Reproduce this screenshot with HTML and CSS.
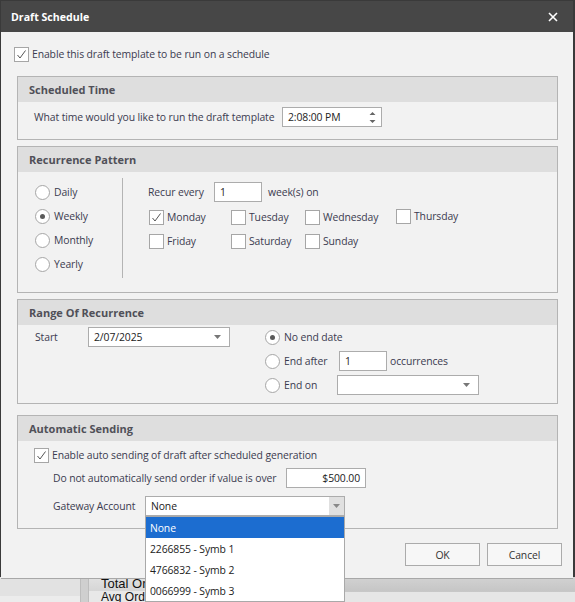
FILE: index.html
```html
<!DOCTYPE html>
<html>
<head>
<meta charset="utf-8">
<link rel="stylesheet" href="styles.css">
</head>
<body>
<div class="app">
  <div class="app-top"></div>
  <div class="app-bottom">
    <div class="app-side"></div>
    <div class="app-panel">
      <div class="app-text">Total Ord</div>
      <div class="app-text second">Avg Ord</div>
    </div>
    <div class="app-rest"></div>
  </div>
</div>

<div class="dialog">
  <div class="titlebar">
    <span class="title">Draft Schedule</span>
    <svg class="close" width="10" height="10" viewBox="0 0 10 10"><path d="M1 1L9 9M9 1L1 9" stroke="#fff" stroke-width="1.6"/></svg>
  </div>
  <div class="dlg-body">
    <div class="chk-row top-row">
      <span class="box"><svg width="13" height="13" viewBox="0 0 13 13"><path d="M2.5 7L5 10L10.5 2.5" fill="none" stroke="#555" stroke-width="1"/></svg></span>
      <span>Enable this draft template to be run on a schedule</span>
    </div>

    <section class="group g-time">
      <div class="group-head">Scheduled Time</div>
      <div class="group-body time-body">
        <span class="time-lbl">What time would you like to run the draft template</span>
        <div class="field spin">
          <span>2:08:00 PM</span>
          <svg width="7" height="13" viewBox="0 0 7 13"><path d="M0.5 4L3.5 1L6.5 4Z M0.5 9L3.5 12L6.5 9Z" fill="#666"/></svg>
        </div>
      </div>
    </section>

    <section class="group g-rec">
      <div class="group-head">Recurrence Pattern</div>
      <div class="group-body rec-body">
        <div class="rec-left">
          <div class="radio-row"><span class="radio"></span><span>Daily</span></div>
          <div class="radio-row"><span class="radio on"></span><span>Weekly</span></div>
          <div class="radio-row"><span class="radio"></span><span>Monthly</span></div>
          <div class="radio-row"><span class="radio"></span><span>Yearly</span></div>
        </div>
        <div class="rec-right">
          <div class="recur-row">
            <span>Recur every</span>
            <div class="field num">1</div>
            <span>week(s) on</span>
          </div>
          <div class="days">
            <div class="chk-row"><span class="box"><svg width="13" height="13" viewBox="0 0 13 13"><path d="M2.5 7L5 10L10.5 2.5" fill="none" stroke="#555" stroke-width="1"/></svg></span><span>Monday</span></div>
            <div class="chk-row"><span class="box"></span><span>Tuesday</span></div>
            <div class="chk-row"><span class="box"></span><span>Wednesday</span></div>
            <div class="chk-row thu"><span class="box"></span><span>Thursday</span></div>
            <div class="chk-row"><span class="box"></span><span>Friday</span></div>
            <div class="chk-row"><span class="box"></span><span>Saturday</span></div>
            <div class="chk-row"><span class="box"></span><span>Sunday</span></div>
          </div>
        </div>
      </div>
    </section>

    <section class="group g-range">
      <div class="group-head">Range Of Recurrence</div>
      <div class="group-body range-body">
        <div class="range-left">
          <span class="start-lbl">Start</span>
          <div class="field combo date">
            <span>2/07/2025</span>
            <svg width="7" height="4" viewBox="0 0 7 4"><path d="M0 0H7L3.5 4Z" fill="#777"/></svg>
          </div>
        </div>
        <div class="range-right">
          <div class="radio-row"><span class="radio on"></span><span>No end date</span></div>
          <div class="radio-row"><span class="radio"></span><span class="rlbl">End after</span><div class="field num">1</div><span class="occ">occurrences</span></div>
          <div class="radio-row"><span class="radio"></span><span class="rlbl end-on">End on</span>
            <div class="field combo endon">
              <span></span>
              <svg width="7" height="4" viewBox="0 0 7 4"><path d="M0 0H7L3.5 4Z" fill="#777"/></svg>
            </div>
          </div>
        </div>
      </div>
    </section>

    <section class="group g-auto">
      <div class="group-head">Automatic Sending</div>
      <div class="group-body auto-body">
        <div class="chk-row">
          <span class="box"><svg width="13" height="13" viewBox="0 0 13 13"><path d="M2.5 7L5 10L10.5 2.5" fill="none" stroke="#555" stroke-width="1"/></svg></span>
          <span>Enable auto sending of draft after scheduled generation</span>
        </div>
        <div class="auto-row value-row">
          <span>Do not automatically send order if value is over</span>
          <div class="field money">$500.00</div>
        </div>
        <div class="auto-row gw-row">
          <span>Gateway Account</span>
          <div class="field combo gw">
            <span>None</span>
            <span class="dd-btn"><svg width="7" height="4" viewBox="0 0 7 4"><path d="M0 0H7L3.5 4Z" fill="#888"/></svg></span>
          </div>
        </div>
      </div>
    </section>

    <div class="buttons">
      <div class="btn">OK</div>
      <div class="btn">Cancel</div>
    </div>
  </div>

  <div class="dropdown">
    <div class="item sel">None</div>
    <div class="item">2266855 - Symb 1</div>
    <div class="item">4766832 - Symb 2</div>
    <div class="item">0066999 - Symb 3</div>
  </div>
</div>
</body>
</html>
```

FILE: styles.css
```css
html, body {
  margin: 0;
  padding: 0;
}
body {
  width: 575px;
  height: 602px;
  overflow: hidden;
  position: relative;
  background: #d4d4d4;
  font-family: "Open Sans", "Noto Sans", sans-serif;
  font-size: 10.4px;
  letter-spacing: -0.1px;
  color: #3b3b50;
}

/* background application */
.app {
  width: 575px;
  height: 602px;
  display: flex;
  flex-direction: column;
  overflow: hidden;
}
.app-top {
  flex: none;
  height: 577px;
  background: #3a3a3a;
}
.app-bottom {
  flex: none;
  height: 25px;
  display: flex;
  background: #cfcfcf;
}
.app-side {
  width: 80px;
  background: #e2e2e2;
  border-right: 1px solid #bdbdbd;
  box-shadow: inset 0 -6px 0 #ececec;
}
.app-panel {
  margin-left: 7px;
  border-left: 1px solid #bdbdbd;
  width: 45px;
  background: linear-gradient(#e2e2e2, #d6d6d6 55%, #e8e8e8 56%, #e8e8e8);
  padding: 0 0 0 12px;
}
.app-rest {
  flex: 1;
  background: linear-gradient(#d2d2d2, #c6c6c6 55%, #a9a9a9 56%, #e6e6e6 60%, #e6e6e6);
}
.app-text {
  font-family: "Liberation Sans", Arial, sans-serif;
  font-size: 13px;
  letter-spacing: 0;
  color: #111;
  line-height: 13px;
  margin-top: 0;
  white-space: nowrap;
}
.app-text.second {
  margin-top: 2px;
  font-size: 12px;
  line-height: 10px;
}

/* dialog */
.dialog {
  position: absolute;
  left: 1px;
  top: 1px;
  width: 572px;
  height: 577px;
  background: #f2f2f2;
  box-shadow: 0 1px 0 #a8a8a8;
}
.titlebar {
  height: 31px;
  background: #474747;
  color: #fff;
  display: flex;
  align-items: center;
  justify-content: space-between;
  padding: 0 15px 0 10px;
}
.title {
  font-weight: 700;
  font-size: 10.6px;
  letter-spacing: 0;
}
.dlg-body {
  padding: 0 15px 0 13px;
}

.chk-row {
  display: flex;
  align-items: center;
  gap: 3px;
  height: 16px;
  white-space: nowrap;
}
.box {
  width: 13px;
  height: 13px;
  border: 1px solid #a6a6a6;
  background: #fff;
  flex: none;
  display: flex;
}
.top-row {
  margin-top: 14px;
}

.group {
  margin-left: 3px;
  width: 539px;
  border: 1px solid #b4b4b4;
}
.group-head {
  height: 25px;
  background: #dedede;
  font-weight: 700;
  font-size: 11px;
  letter-spacing: 0;
  color: #505058;
  display: flex;
  align-items: center;
  padding-left: 11px;
}
.field {
  background: #fff;
  border: 1px solid #acacac;
  height: 18px;
  box-sizing: content-box;
  display: flex;
  align-items: center;
  padding: 0 5px;
  color: #222;
  flex: none;
}

/* scheduled time */
.g-time {
  margin-top: 14px;
}
.time-body {
  height: 37px;
  box-sizing: border-box;
  padding: 5px 0 0 16px;
  display: flex;
  align-items: flex-start;
}
.time-lbl {
  width: 248px;
  line-height: 20px;
  white-space: nowrap;
}
.spin {
  width: 88px;
  justify-content: space-between;
}

/* recurrence */
.g-rec {
  margin-top: 6px;
}
.rec-body {
  height: 120px;
  display: flex;
  align-items: flex-start;
  padding-top: 6px;
  box-sizing: border-box;
}
.rec-left {
  width: 87px;
  padding-left: 17px;
  padding-top: 2px;
  height: 98px;
  border-right: 1px solid #b4b4b4;
}
.rec-left .radio-row {
  height: 24px;
}
.radio-row {
  display: flex;
  align-items: center;
  gap: 4px;
  white-space: nowrap;
}
.radio {
  width: 13px;
  height: 13px;
  border: 1px solid #a6a6a6;
  border-radius: 50%;
  background: #fff;
  flex: none;
  display: flex;
  align-items: center;
  justify-content: center;
}
.radio.on::after {
  content: "";
  width: 5px;
  height: 5px;
  border-radius: 50%;
  background: #5a5a5a;
}
.rec-right {
  padding-left: 25px;
  padding-top: 4px;
}
.recur-row {
  display: flex;
  align-items: center;
  gap: 6px;
  height: 20px;
}
.recur-row > span:first-child {
  width: 60px;
}
.num {
  width: 36px;
}
.days {
  margin-top: 7px;
  margin-left: 1px;
  display: grid;
  grid-template-columns: 82px 74px 91px auto;
  row-gap: 8px;
}
.thu {
  position: relative;
  top: -1px;
}

/* range */
.g-range {
  margin-top: 6px;
}
.range-body {
  height: 78px;
  box-sizing: border-box;
  padding-top: 2px;
  display: flex;
  align-items: flex-start;
}
.range-left {
  width: 230px;
  padding-left: 17px;
  display: flex;
  align-items: center;
  height: 20px;
}
.start-lbl {
  width: 53px;
}
.combo {
  justify-content: space-between;
  padding-right: 8px;
}
.date {
  width: 127px;
}
.range-right {
  display: flex;
  flex-direction: column;
  gap: 4px;
}
.range-right .radio-row {
  height: 20px;
}
.rlbl {
  width: 51px;
}
.end-on {
  width: 49px;
}
.occ {
  margin-left: -1px;
}
.endon {
  width: 127px;
}

/* automatic sending */
.g-auto {
  margin-top: 11px;
}
.auto-body {
  height: 87px;
  box-sizing: border-box;
  padding: 6px 0 0 16px;
}
.auto-row {
  display: flex;
  align-items: center;
  height: 20px;
  padding-left: 19px;
  white-space: nowrap;
}
.value-row {
  margin-top: 5px;
}
.value-row span {
  width: 233px;
}
.money {
  width: 68px;
  justify-content: flex-end;
}
.gw-row {
  margin-top: 8px;
}
.gw-row > span {
  width: 92px;
}
.gw {
  width: 193px;
  padding-right: 0;
}
.dd-btn {
  width: 15px;
  height: 18px;
  background: #e0e0e0;
  display: flex;
  align-items: center;
  justify-content: center;
}

/* buttons */
.buttons {
  margin-top: 14px;
  display: flex;
  justify-content: flex-end;
  gap: 7px;
  margin-right: -4px;
}
.btn {
  width: 73px;
  height: 21px;
  border: 1px solid #ababab;
  background: #f7f7f7;
  display: flex;
  align-items: center;
  justify-content: center;
  color: #333;
}

/* dropdown list */
.dropdown {
  position: absolute;
  left: 144px;
  top: 515px;
  width: 198px;
  border: 1px solid #a9a9a9;
  background: #fff;
  color: #222;
}
.item {
  height: 21px;
  display: flex;
  align-items: center;
  padding-left: 4px;
}
.item.sel {
  background: #1c6dd0;
  color: #fff;
}
```
